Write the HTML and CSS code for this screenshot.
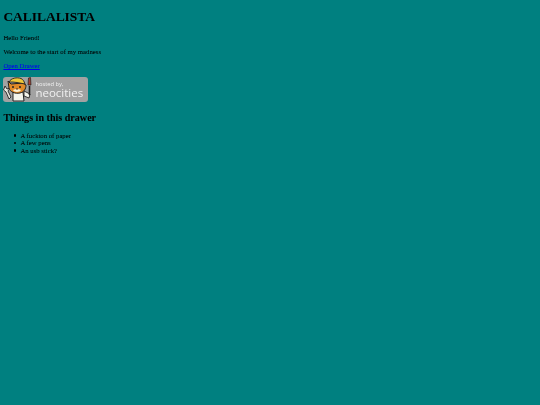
FILE: index.html
```html
<!DOCTYPE html>
<html>
<head>
<meta charset="utf-8">
<title>Calilalista</title>
<link rel="stylesheet" href="styles.css">
</head>
<body>

<h1>CALILALISTA</h1>
<p>Hello Friend!</p>
<p>Welcome to the start of my madness</p>
<p><a href="#drawer">Open Drawer</a></p>

<a class="badge" href="#neocities">
  <svg class="cat" width="32" height="25" viewBox="0 0 32 25">
    <!-- wrench -->
    <path d="M2 9 L4 12 L7 11 L5 14 L8 20 L6 22 L3 15 L0.5 13 Z" fill="#e8e8e0" stroke="#222" stroke-width="0.9"/>
    <!-- body -->
    <path d="M10 15 L20 15 L21 24 L10 24 Z" fill="#f4f4ec" stroke="#222" stroke-width="1"/>
    <path d="M21 14 L27 17 L26 21 L21 19 Z" fill="#f4f4ec" stroke="#222" stroke-width="0.9"/>
    <!-- head -->
    <path d="M5 4 L8 7 L20 6 L23 8 C23 12 21 15 17 16 C12 17 7 15 6 11 Z" fill="#e08a28" stroke="#222" stroke-width="1"/>
    <path d="M10 13 C12 12 13 12 14 12.5 C15 12 17 12 18 13 C17 15.5 11 15.5 10 13 Z" fill="#fdf0d0"/>
    <circle cx="10" cy="10" r="1" fill="#222"/>
    <circle cx="17" cy="10" r="1" fill="#222"/>
    <path d="M13 11.5 L15 11.5 L14 13 Z" fill="#222"/>
    <!-- hard hat -->
    <path d="M6 5 C8 1 14 0 18 1.5 C20 2.5 21 4 22 7 L14 5.5 C11 5 9 5 6 5 Z" fill="#eec83a" stroke="#222" stroke-width="0.9"/>
    <!-- brush -->
    <path d="M26.5 9 L26.5 18" stroke="#222" stroke-width="1.6"/>
    <path d="M25.5 1 L27.5 0.5 L28 8 L25 8 Z" fill="#a84030" stroke="#222" stroke-width="0.7"/>
  </svg>
  <span class="badge-text">
    <span class="hosted">hosted by,</span>
    <span class="neo">neocities</span>
  </span>
</a>

<h2>Things in this drawer</h2>
<ul>
  <li>A fuckton of paper</li>
  <li>A few pens</li>
  <li>An usb stick?</li>
</ul>

</body>
</html>
```

FILE: styles.css
```css
body {
    margin: 3px 3.4px;
    background-color: #008080;
    color: #000;
    font-family: "Liberation Serif", "Times New Roman", serif;
    font-size: 6.72px;
    line-height: 7.6px;
    -webkit-text-stroke: 0.06px;
    filter: blur(0.25px);
}
h1 {
    font-size: 13.44px;
    line-height: 15.5px;
    margin: 6px 0 9px;
}
h2 {
    font-size: 10.08px;
    line-height: 11.6px;
    margin: 10px 0 8px;
}
p {
    margin: 6.9px 0;
}
a {
    color: #00e;
}
ul {
    list-style: none;
    margin: 0;
    padding-left: 17px;
}
li {
    display: flex;
    align-items: center;
}
li::before {
    content: "";
    width: 2.5px;
    height: 2.5px;
    margin: 0 4px 0 -6.5px;
    border-radius: 50%;
    background-color: #000;
}
.badge {
    display: flex;
    width: 85px;
    height: 25px;
    background-color: #a2a2a2;
    border-radius: 3px;
    text-decoration: none;
}
.cat {
    flex: none;
}
.badge-text {
    display: flex;
    flex-direction: column;
    padding-top: 4px;
    color: #f0f0f0;
    font-family: "Open Sans", "Liberation Sans", sans-serif;
    -webkit-text-stroke: 0;
}
.hosted {
    font-size: 5.8px;
    line-height: 6px;
}
.neo {
    font-size: 11.5px;
    line-height: 11px;
}
```
